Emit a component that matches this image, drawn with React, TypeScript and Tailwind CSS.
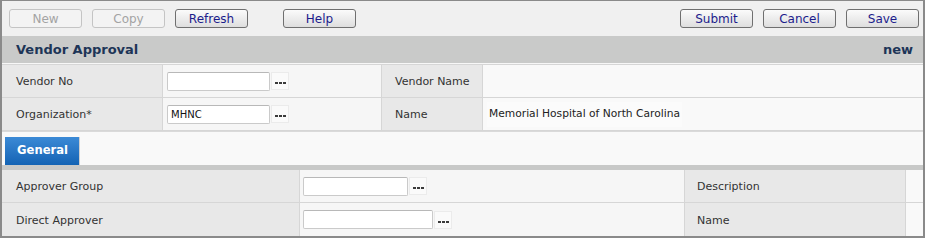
import React from "react";

const F = "font-['DejaVu_Sans',sans-serif]";

function Btn({ label, disabled }: { label: string; disabled?: boolean }) {
  return (
    <button
      className={
        "w-[73px] h-[19px] rounded-[3px] border text-[12px] leading-none flex items-center justify-center " +
        (disabled
          ? "border-[#c4c4c4] bg-[#f3f3f3] text-[#a3a3a3]"
          : "border-[#6f6f6f] bg-gradient-to-b from-[#fbfbfb] to-[#dedede] text-[#1c1c8c]")
      }
    >
      {label}
    </button>
  );
}

function Dots() {
  return (
    <div className="w-[18px] h-[18px] bg-[#fafafa] border border-[#ebebeb] flex items-center justify-center gap-[1px] pt-[4px]">
      <span className="w-[3px] h-[2px] bg-[#3a3a3a]" />
      <span className="w-[3px] h-[2px] bg-[#3a3a3a]" />
      <span className="w-[3px] h-[2px] bg-[#3a3a3a]" />
    </div>
  );
}

function Input({ w, value }: { w: string; value?: string }) {
  return (
    <div className="flex items-center gap-[1px]">
      <div
        className={
          w +
          " h-[19px] bg-white border border-[#cacaca] border-t-[#b8b8b8] rounded-[2px] flex items-center px-[3px] pt-[1px] text-[10px] text-[#111]"
        }
      >
        {value}
      </div>
      <Dots />
    </div>
  );
}

const lbl = "bg-[#e8e8e8] border-r border-b border-[#d6d6d6] flex items-center pt-[3px] text-[11px] text-[#333]";
const val = "bg-[#f6f6f6] border-r border-b border-[#d6d6d6] flex items-center";

export default function App() {
  return (
    <div className={F + " w-[925px] h-[238px] border-[#8a8a8a] border-t border-l-2 border-r-2 border-b-2 bg-[#f0f0f0] flex flex-col"}>
      {/* toolbar */}
      <div className="h-[35px] flex items-start pt-[8px] pl-[7px] pr-[4px]">
        <div className="flex gap-[10px]">
          <Btn label="New" disabled />
          <Btn label="Copy" disabled />
          <Btn label="Refresh" />
        </div>
        <div className="ml-[35px]">
          <Btn label="Help" />
        </div>
        <div className="ml-auto flex gap-[10px]">
          <Btn label="Submit" />
          <Btn label="Cancel" />
          <Btn label="Save" />
        </div>
      </div>
      {/* header */}
      <div className="h-[27px] bg-[#c9cac9] flex items-center justify-between pl-[14px] pr-[10px] pt-[1px] font-bold text-[13px] text-[#1d3557]">
        <span>Vendor Approval</span>
        <span>new</span>
      </div>
      <div className="h-[1px] bg-[#f7f7f7]" />
      <div className="h-[1px] bg-[#d6d6d6]" />
      {/* table 1 */}
      <div className="grid grid-cols-[161px_219px_101px_1fr] grid-rows-[33px_33px]">
        <div className={lbl + " pl-[14px]"}>Vendor No</div>
        <div className={val + " pl-[4px]"}>
          <Input w="w-[103px]" />
        </div>
        <div className={lbl + " pl-[13px]"}>Vendor Name</div>
        <div className={val + " bg-[#f9f9f9] border-r-0"} />
        <div className={lbl + " pl-[14px]"}>Organization*</div>
        <div className={val + " pl-[4px]"}>
          <Input w="w-[103px]" value="MHNC" />
        </div>
        <div className={lbl + " pl-[13px]"}>Name</div>
        <div className={val + " bg-[#f9f9f9] border-r-0 pl-[4px] pt-[1px]"}>
          <span className="bg-[#fbfbfb] px-[2px] py-[4px] text-[10.7px] text-[#222]">Memorial Hospital of North Carolina</span>
        </div>
      </div>
      {/* tab strip */}
      <div className="h-[34px] bg-[#f9f9f9] flex items-end pl-[3px] border-t border-[#dadada]">
        <div className="w-[75px] h-[28px] bg-gradient-to-b from-[#3b8ad6] to-[#1263b4] border-r border-[#d0d0d0] flex items-center pl-[12px] text-white font-bold text-[11.6px]">
          General
        </div>
      </div>
      <div className="h-[5px] bg-[#c8c9c8]" />
      {/* table 2 */}
      <div className="grid grid-cols-[298px_385px_221px_1fr] grid-rows-[33px_33px]">
        <div className={lbl + " pl-[14px]"}>Approver Group</div>
        <div className={val + " pl-[3px]"}>
          <Input w="w-[105px]" />
        </div>
        <div className={lbl + " pl-[12px]"}>Description</div>
        <div className={val + " bg-[#f9f9f9] border-r-0"} />
        <div className={lbl + " pl-[14px] border-b-0"}>Direct Approver</div>
        <div className={val + " pl-[3px] border-b-0"}>
          <Input w="w-[130px]" />
        </div>
        <div className={lbl + " pl-[12px] border-b-0"}>Name</div>
        <div className={val + " bg-[#f9f9f9] border-r-0 border-b-0"} />
      </div>
    </div>
  );
}
